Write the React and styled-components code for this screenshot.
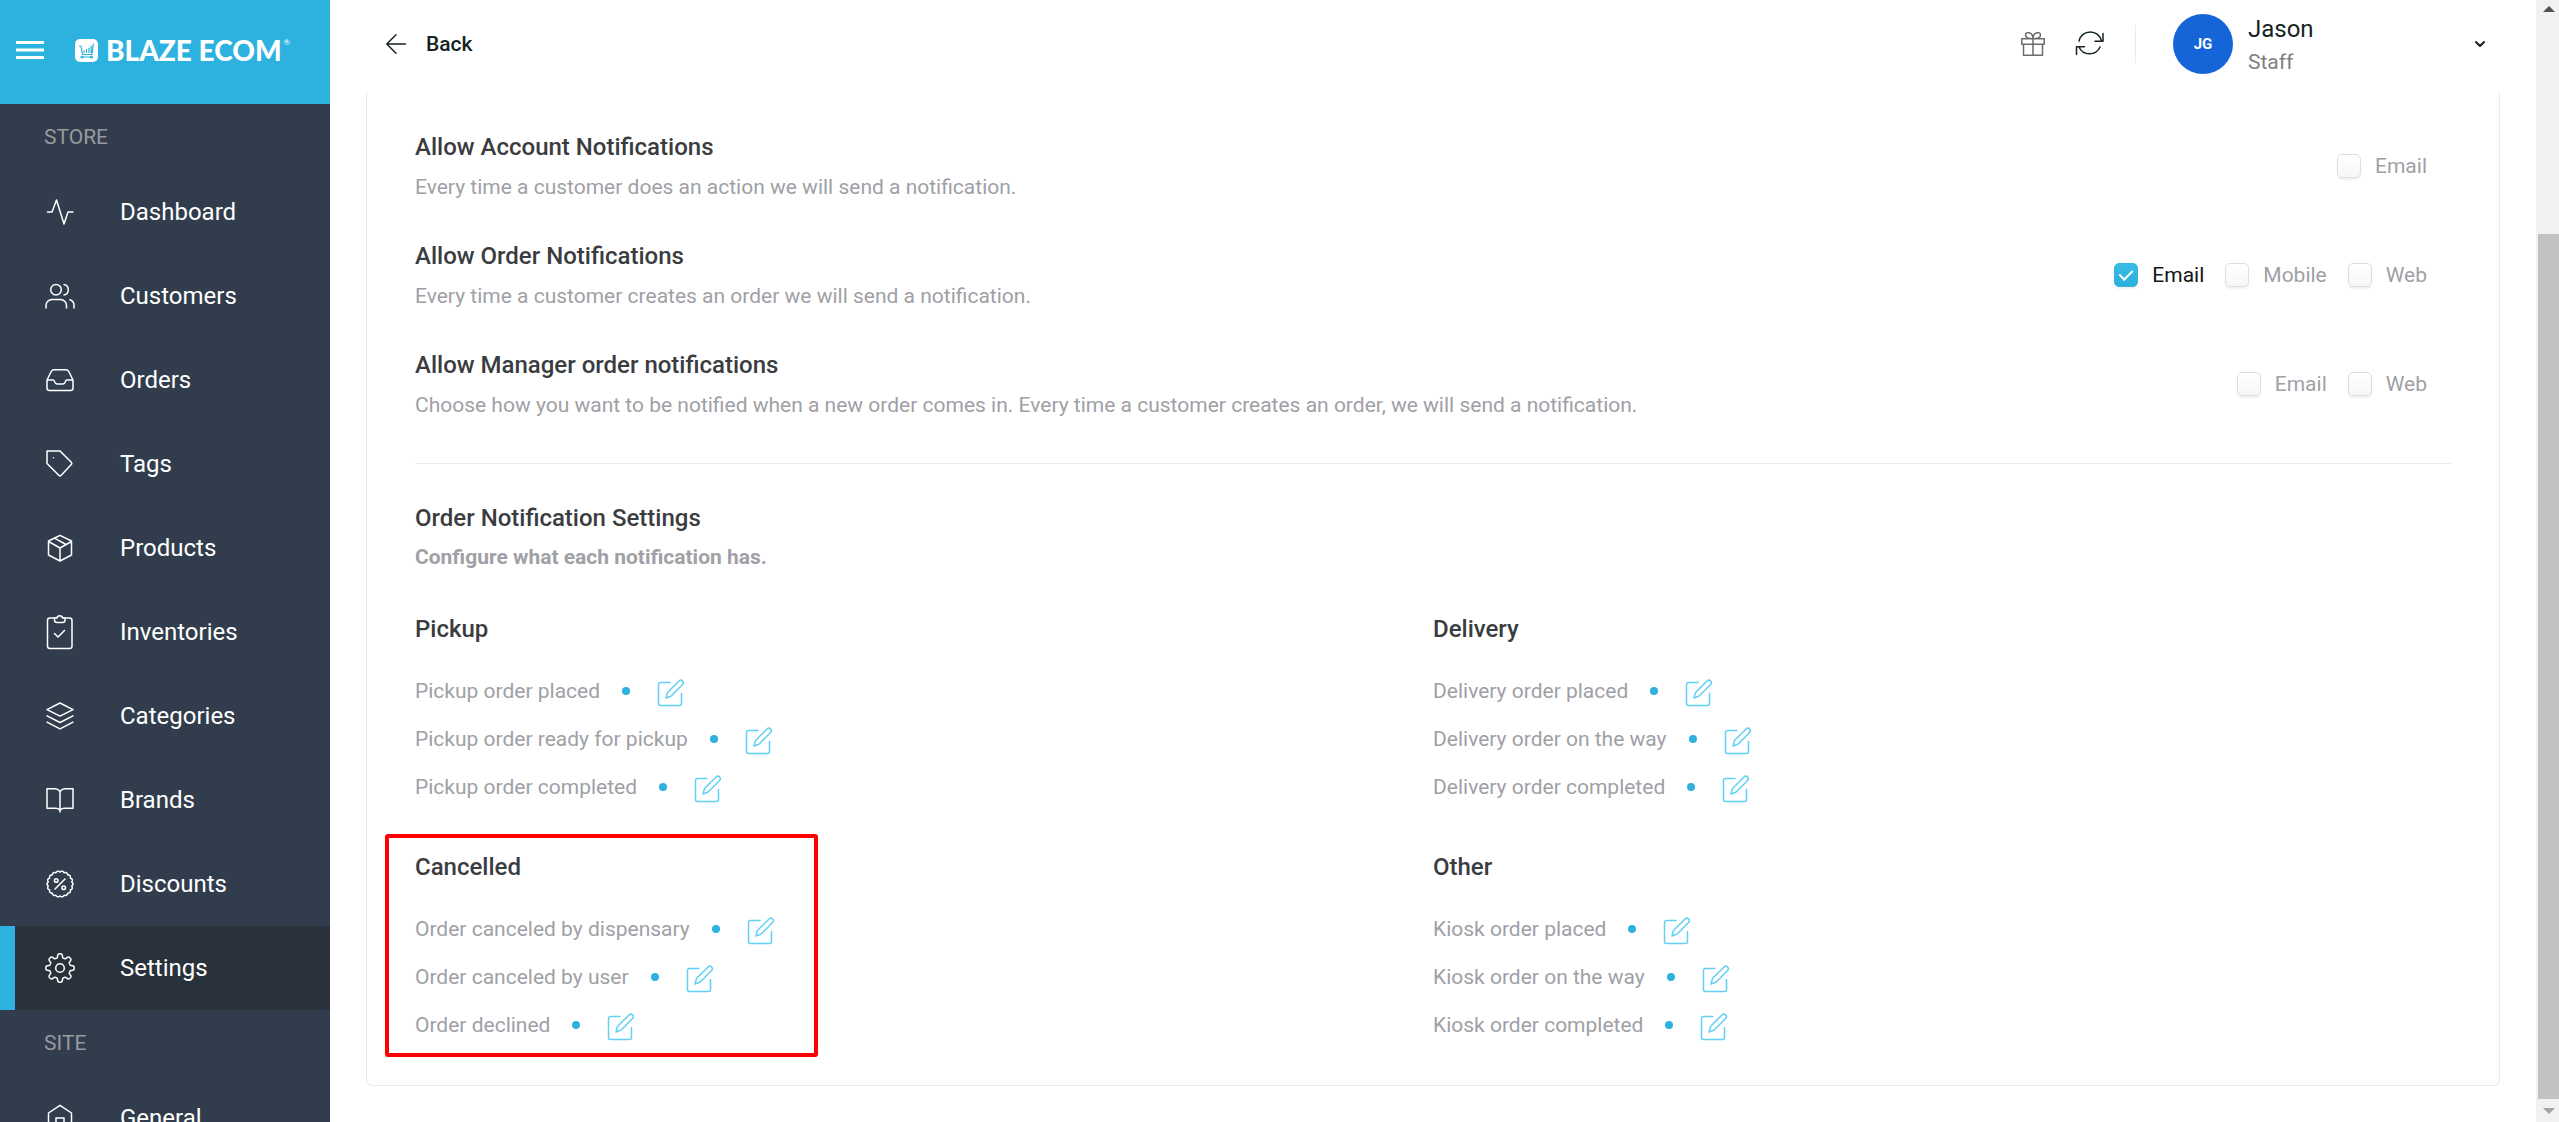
import { useState } from "react";
import styled, { createGlobalStyle } from "styled-components";

const GlobalStyle = createGlobalStyle`
  :root {
    --blue: #2db1de;
    --navy: #313d4d;
    --navy-dark: #29323b;
    --line: #e9e9f1;
    --heading: #3a3c40;
    --muted: #a0a0a6;
    --ink: #14241f;
  }

  * {
    box-sizing: border-box;
  }

  body {
    margin: 0;
    font-family: Roboto, "Liberation Sans", sans-serif;
    font-size: 21px;
    line-height: 32px;
    background: #fff;
    overflow: hidden;
  }

  button {
    padding: 0;
    border: 0;
    background: none;
    font: inherit;
    color: inherit;
    cursor: pointer;
  }

  h1, h2, h3, p, ul {
    margin: 0;
    padding: 0;
  }

  ul {
    list-style: none;
  }
`;

const StyledApp = styled.div`
  height: 100vh;
  display: grid;
  grid-template-columns: 330px 1fr 23px;
  overflow: hidden;
`;

const StyledSvg = styled.svg`
  display: block;
  flex: none;
  overflow: visible;
  fill: none;
  stroke: currentColor;
  stroke-width: ${(props) => props.$stroke || 1.5};
  stroke-linecap: round;
  stroke-linejoin: round;
`;

/* Sidebar */

const StyledSidebar = styled.aside`
  min-height: 0;
  overflow: hidden;
  background: var(--navy);
  color: #fff;
`;

const StyledBrand = styled.div`
  height: 104px;
  padding: 0 16px 4px;
  display: flex;
  align-items: center;
  gap: 31px;
  background: var(--blue);
`;

const StyledLogo = styled.a`
  display: flex;
  align-items: center;
  gap: 8px;
  color: #fff;
  text-decoration: none;
  font-family: Lato, sans-serif;
  font-size: 28px;
  font-weight: 900;
  white-space: nowrap;

  sup {
    align-self: flex-start;
    margin-left: -6px;
    font-size: 8px;
    font-weight: 400;
    line-height: 16px;
  }
`;

const StyledNavTitle = styled.h2`
  height: 66px;
  padding-left: 44px;
  font-size: 21px;
  font-weight: 400;
  line-height: 66px;
  color: #989a9d;
`;

const StyledNavLink = styled.a`
  height: 84px;
  padding-left: 45px;
  display: flex;
  align-items: center;
  gap: 45px;
  font-size: 24px;
  color: #fff;
  text-decoration: none;
  background: ${(props) => (props.$active ? "var(--navy-dark)" : "none")};
  box-shadow: ${(props) => (props.$active ? "inset 15px 0 var(--blue)" : "none")};
`;

/* Top bar */

const StyledMain = styled.div`
  min-width: 0;
  min-height: 0;
  display: flex;
  flex-direction: column;
  overflow: hidden;
`;

const StyledHeader = styled.header`
  flex: none;
  height: 92px;
  padding: 0 51px 4px 56px;
  display: flex;
  align-items: center;
  color: var(--ink);
`;

const StyledBack = styled.button`
  display: flex;
  align-items: center;
  gap: 20px;
  margin-right: auto;
  font-weight: 500;
`;

const StyledTools = styled.div`
  height: 38px;
  padding-right: 30px;
  margin-right: 37px;
  display: flex;
  align-items: center;
  gap: 30px;
  border-right: 1px solid var(--line);
`;

const StyledUser = styled.button`
  width: 312px;
  display: flex;
  align-items: center;
  text-align: left;
  gap: 15px;
`;

const StyledAvatar = styled.span`
  width: 60px;
  height: 60px;
  border-radius: 50%;
  display: grid;
  place-items: center;
  font-size: 15px;
  font-weight: 700;
  color: #fff;
  background: #1665d8;
`;

const StyledUserName = styled.span`
  flex: 1;
  padding-top: 3px;
  font-size: 24px;

  small {
    display: block;
    margin-top: 1px;
    font-size: 21px;
    color: #808084;
  }
`;

/* Content */

const StyledCard = styled.main`
  margin: 0 36px;
  padding: 37px 48px 36px;
  border: 1px solid var(--line);
  border-top: 0;
  border-radius: 0 0 6px 6px;
`;

const StyledTitle = styled.h3`
  font-size: 24px;
  font-weight: 500;
  line-height: 36px;
  color: var(--heading);
`;

const StyledText = styled.p`
  margin-top: ${(props) => (props.$strong ? "5px" : "6px")};
  font-weight: ${(props) => (props.$strong ? 700 : 400)};
  color: var(--muted);
`;

const StyledToggles = styled.section`
  padding-bottom: 42px;
  margin-bottom: 36px;
  display: flex;
  flex-direction: column;
  gap: 35px;
  border-bottom: 1px solid var(--line);
`;

const StyledToggleRow = styled.div`
  display: flex;
  align-items: center;
  justify-content: space-between;
  padding-right: 24px;
`;

const StyledChecks = styled.div`
  display: flex;
  gap: 21px;
`;

const StyledCheckLabel = styled.label`
  display: flex;
  align-items: center;
  gap: 14px;
  color: ${(props) => (props.$on ? "#141414" : "var(--muted)")};
`;

const StyledCheckbox = styled.input`
  appearance: none;
  width: 24px;
  height: 24px;
  margin: 0;
  display: grid;
  place-items: center;
  border: 1px solid #dfded8;
  border-radius: 5px;
  background: linear-gradient(#fff, #f6f7f9);
  box-shadow: 0 2px 2px rgba(0, 0, 0, 0.06);

  &:checked {
    border-color: #34b5df;
    background: linear-gradient(#3abde4, #2aaedb);
  }

  &:checked::after {
    content: "";
    width: 6px;
    height: 11px;
    margin-bottom: 4px;
    border: solid #fff;
    border-width: 0 2px 2px 0;
    transform: rotate(45deg);
  }
`;

const StyledGroups = styled.section`
  margin-top: 38px;
  display: grid;
  grid-template-columns: 1fr 1fr;
  row-gap: 38px;
`;

const StyledGroup = styled.div`
  position: relative;
`;

const StyledHighlight = styled.div`
  position: absolute;
  top: -15px;
  bottom: -8px;
  left: -30px;
  width: 433px;
  border: 4px solid #f00;
  border-radius: 3px;
  pointer-events: none;
`;

const StyledList = styled.ul`
  margin-top: 20px;
`;

const StyledListItem = styled.li`
  height: 48px;
  display: flex;
  align-items: center;
  color: var(--muted);

  &::after {
    content: "";
    order: 1;
    width: 8px;
    height: 8px;
    margin: 0 27px 0 22px;
    border-radius: 50%;
    background: var(--blue);
  }

  button {
    order: 2;
    padding-top: 3px;
    color: #62cff5;
  }
`;

/* Scroll bar */

const StyledScrollbar = styled.div`
  display: flex;
  flex-direction: column;
  padding: 6px 0 8px 2px;
  background: #f1f1f1;
`;

const StyledArrow = styled.svg`
  display: block;
  flex: none;
  margin: 0 auto;
  fill: ${(props) => (props.$dim ? "#a3a3a3" : "#505050")};
`;

const StyledTrack = styled.div`
  flex: 1;
  margin: 6px 0 9px;
  display: flex;
  flex-direction: column;

  &::before {
    content: "";
    flex: 20;
  }
`;

const StyledThumb = styled.div`
  flex: 80;
  background: #c1c1c1;
`;

// closed outline whose radius follows fn(angle)
function ring(fn) {
  const points = [];
  for (let i = 0; i < 240; i++) {
    const a = (i / 240) * Math.PI * 2;
    const r = fn(a);
    points.push(
      `${(15 + r * Math.sin(a)).toFixed(2)} ${(15 - r * Math.cos(a)).toFixed(2)}`
    );
  }
  return `M${points.join("L")}Z`;
}

const badgeRing = ring((a) => 11.9 + 1.1 * Math.abs(Math.sin(a * 9)));
const gearRing = ring((a) => 12.3 + 1.9 * Math.tanh(2.4 * Math.cos(a * 8)));

const navIcons = {
  dashboard: <path d="M2.5 15H7l4.5-12L19 27l4-12h5" />,
  customers: (
    <>
      <circle cx="11" cy="8.7" r="5.3" />
      <path d="M19 3.5a5.3 5.3 0 0 1 0 10.4M1 27v-2.5a6 6 0 0 1 6-6h8.5a6 6 0 0 1 6 6V27M25 18.7a6 6 0 0 1 4 5.8V27" />
    </>
  ),
  orders: (
    <path d="M2 15h6.5c1.2 0 .8 4 3.5 4h6c2.7 0 2.3-4 3.5-4H28M2 15l4.2-8.5a3 3 0 0 1 2.5-1.8h12.6a3 3 0 0 1 2.5 1.8L28 15v8a2.5 2.5 0 0 1-2.5 2.5h-21A2.5 2.5 0 0 1 2 23z" />
  ),
  tags: (
    <>
      <path d="M2 2h13l11.3 11.2a1.7 1.7 0 0 1 0 2.4L16.2 26.3a1.7 1.7 0 0 1-2.4 0L2 14.5z" />
      <path d="M8.5 8.7h.01" />
    </>
  ),
  products: (
    <path d="M15 2.3 26.5 8v14L15 28 3.5 22V8zM3.5 8.5 15 15l11.5-6.5M15 15v13M9.5 5.2 21 11.5" />
  ),
  inventories: (
    <>
      <rect x="2.5" y="1" width="24.5" height="30.5" rx="2.5" />
      <path
        fill="#313d4d"
        d="M9.5 1v2a2.5 2.5 0 0 0 2.5 2.5h5.500A2.5 2.5 0 0 0 20 3V1h-2.500a2.8 2.8 0 0 0-5.500 0z"
      />
      <path d="m9.5 16.5 3.5 3.5 6.5-6.5" />
    </>
  ),
  categories: (
    <path d="m15 2 13 6.7-13 6.5L2 8.700zM2 14.8l13 6.7 13-6.700M2 21.2l13 6.7 13-6.700" />
  ),
  brands: (
    <path d="M15 6.5c-1.500-2-3-2.700-5-2.700H2v19.500h9c2 0 3.2.8 4 2.2.8-1.400 2-2.200 4-2.200h9V3.8h-8c-2 0-3.500.7-5 2.700zV27" />
  ),
  discounts: (
    <>
      <path d={badgeRing} />
      <circle cx="11.2" cy="11.5" r="1.8" />
      <circle cx="18.7" cy="18.7" r="1.8" />
      <path d="m20 10-10 10" />
    </>
  ),
  settings: (
    <>
      <path d={gearRing} />
      <circle cx="15" cy="15" r="4.3" />
    </>
  ),
  general: <path d="M3.5 10 15 2.3 26.5 10v18h-23zM11 28V15h8v13" />,
};

const sections = [
  {
    title: "STORE",
    items: [
      "Dashboard",
      "Customers",
      "Orders",
      "Tags",
      "Products",
      "Inventories",
      "Categories",
      "Brands",
      "Discounts",
      "Settings",
    ],
  },
  { title: "SITE", items: ["General"] },
];

const toggles = [
  {
    title: "Allow Account Notifications",
    text: "Every time a customer does an action we will send a notification.",
    channels: ["Email"],
  },
  {
    title: "Allow Order Notifications",
    text: "Every time a customer creates an order we will send a notification.",
    channels: ["Email", "Mobile", "Web"],
    on: ["Email"],
  },
  {
    title: "Allow Manager order notifications",
    text: "Choose how you want to be notified when a new order comes in. Every time a customer creates an order, we will send a notification.",
    channels: ["Email", "Web"],
  },
];

const groups = [
  {
    title: "Pickup",
    items: [
      "Pickup order placed",
      "Pickup order ready for pickup",
      "Pickup order completed",
    ],
  },
  {
    title: "Delivery",
    items: [
      "Delivery order placed",
      "Delivery order on the way",
      "Delivery order completed",
    ],
  },
  {
    title: "Cancelled",
    highlight: true,
    items: [
      "Order canceled by dispensary",
      "Order canceled by user",
      "Order declined",
    ],
  },
  {
    title: "Other",
    items: [
      "Kiosk order placed",
      "Kiosk order on the way",
      "Kiosk order completed",
    ],
  },
];

function Sidebar() {
  return (
    <StyledSidebar>
      <StyledBrand>
        <button aria-label="Toggle menu">
          <StyledSvg width="28" height="18" $stroke={3}>
            <path strokeLinecap="butt" d="M0 1.5h28M0 9h28M0 16.5h28" />
          </StyledSvg>
        </button>
        <StyledLogo href="#home">
          <StyledSvg width="23" height="23" $stroke={1.2}>
            <rect width="23" height="23" rx="5" fill="#fff" stroke="none" />
            <path
              stroke="#2db1de"
              d="M4.5 7H6l1.5 8.5H17L18.3 5M9 13.5V12M11.5 13.5v-3M14 13.5V9M16.2 13.5V7M6.5 18H17"
            />
            <circle cx="7" cy="18" r="1" stroke="#2db1de" />
            <circle cx="16.5" cy="18" r="1" stroke="#2db1de" />
          </StyledSvg>
          BLAZE ECOM
          <sup>®</sup>
        </StyledLogo>
      </StyledBrand>
      {sections.map((section) => (
        <nav key={section.title} aria-label={section.title}>
          <StyledNavTitle>{section.title}</StyledNavTitle>
          {section.items.map((item) => (
            <StyledNavLink
              key={item}
              href={`#${item.toLowerCase()}`}
              $active={item === "Settings"}
            >
              <StyledSvg width="30" height="30">
                {navIcons[item.toLowerCase()]}
              </StyledSvg>
              {item}
            </StyledNavLink>
          ))}
        </nav>
      ))}
    </StyledSidebar>
  );
}

function Header() {
  return (
    <StyledHeader>
      <StyledBack>
        <StyledSvg width="20" height="20">
          <path d="M19.5 10H.8M10 .8.8 10l9.2 9.2" />
        </StyledSvg>
        Back
      </StyledBack>
      <StyledTools>
        <button aria-label="Rewards">
          <StyledSvg width="24" height="24" color="#6c6c70">
            <path d="M.8 6.8h22.400v5.500H.8zM2.5 12.3h19v11h-19zM12 6.8v16.500M12 6.800C8 6.8 4.5 5.5 4.5 3S6.500.5 8 .8c2.500.5 4 3 4 6zM12 6.8c4 0 7.500-1.300 7.500-3.800S17.500.5 16 .8c-2.500.5-4 3-4 6z" />
          </StyledSvg>
        </button>
        <button aria-label="Refresh">
          <StyledSvg width="30" height="24">
            <path d="M4 9A11.5 11.5 0 0 1 26.5 9M28 1.5v7.7h-8M25 15A11.5 11.5 0 0 1 4 15M1.500 22.500v-7.700h8" />
          </StyledSvg>
        </button>
      </StyledTools>
      <StyledUser>
        <StyledAvatar>JG</StyledAvatar>
        <StyledUserName>
          Jason
          <small>Staff</small>
        </StyledUserName>
        <StyledSvg width="10" height="6" $stroke={2}>
          <path d="m1 1 4 4 4-4" />
        </StyledSvg>
      </StyledUser>
    </StyledHeader>
  );
}

function Check({ label, defaultOn }) {
  const [on, setOn] = useState(defaultOn);

  return (
    <StyledCheckLabel $on={on}>
      <StyledCheckbox
        type="checkbox"
        checked={on}
        onChange={(e) => setOn(e.target.checked)}
      />
      {label}
    </StyledCheckLabel>
  );
}

function ToggleRow({ title, text, channels, on = [] }) {
  return (
    <StyledToggleRow>
      <div>
        <StyledTitle>{title}</StyledTitle>
        <StyledText>{text}</StyledText>
      </div>
      <StyledChecks>
        {channels.map((channel) => (
          <Check
            key={channel}
            label={channel}
            defaultOn={on.includes(channel)}
          />
        ))}
      </StyledChecks>
    </StyledToggleRow>
  );
}

function Group({ title, items, highlight }) {
  return (
    <StyledGroup>
      <StyledTitle>{title}</StyledTitle>
      <StyledList>
        {items.map((item) => (
          <StyledListItem key={item}>
            {item}
            <button aria-label={`Edit ${item}`}>
              <StyledSvg width="28" height="28">
                <path d="M13 3.5H3.500a2 2 0 0 0-2 2v19a2 2 0 0 0 2 2h19a2 2 0 0 0 2-2v-10" />
                <path d="m9 19 1.2-4.500a4 4 0 0 1 1-1.700L22.3 1.700a2.5 2.5 0 0 1 3.5 3.500L14.7 16.500a4 4 0 0 1-1.700 1z" />
              </StyledSvg>
            </button>
          </StyledListItem>
        ))}
      </StyledList>
      {highlight && <StyledHighlight />}
    </StyledGroup>
  );
}

function App() {
  return (
    <StyledApp>
      <GlobalStyle />
      <Sidebar />
      <StyledMain>
        <Header />
        <StyledCard>
          <StyledToggles>
            {toggles.map((toggle) => (
              <ToggleRow key={toggle.title} {...toggle} />
            ))}
          </StyledToggles>
          <StyledTitle>Order Notification Settings</StyledTitle>
          <StyledText $strong>Configure what each notification has.</StyledText>
          <StyledGroups>
            {groups.map((group) => (
              <Group key={group.title} {...group} />
            ))}
          </StyledGroups>
        </StyledCard>
      </StyledMain>
      <StyledScrollbar aria-hidden="true">
        <StyledArrow width="12" height="6">
          <path d="M0 6 6 0l6 6z" />
        </StyledArrow>
        <StyledTrack>
          <StyledThumb />
        </StyledTrack>
        <StyledArrow width="12" height="6" $dim>
          <path d="M0 0h12L6 6z" />
        </StyledArrow>
      </StyledScrollbar>
    </StyledApp>
  );
}

export default App;
